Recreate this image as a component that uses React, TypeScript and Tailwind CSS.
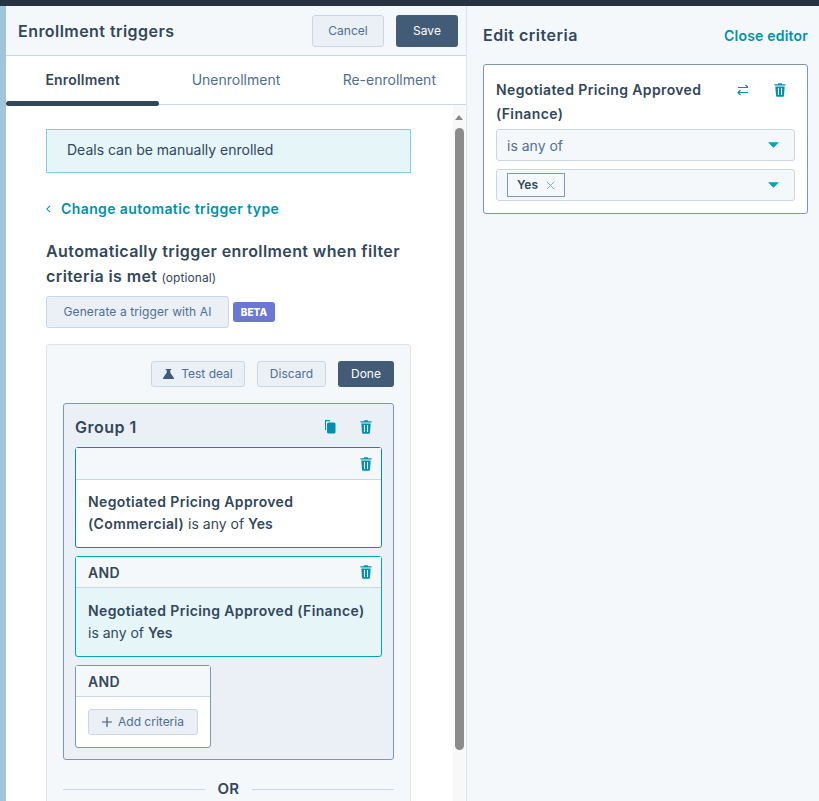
function Trash({ className = "" }: { className?: string }) {
  return (
    <svg viewBox="0 0 14 16" className={`w-[12px] h-[14px] ${className}`} fill="currentColor">
      <path d="M5 0h4l.6 1.2H13.5v1.6H.5V1.2h3.9z" />
      <path d="M1.5 3.8h11l-.9 11a1.2 1.2 0 0 1-1.2 1.2H3.6a1.2 1.2 0 0 1-1.2-1.2zM4.6 5.6v8.2h1.2V5.6zm3.6 0v8.2h1.2V5.6z" fillRule="evenodd" />
    </svg>
  );
}

function Caret() {
  return (
    <svg viewBox="0 0 12 6" className="w-[11px] h-[6px] text-[#00a4bd]" fill="currentColor">
      <path d="M0 0h12L6 6z" />
    </svg>
  );
}

function Tab({ label, active }: { label: string; active?: boolean }) {
  return (
    <div className={`flex-1 flex items-center justify-center pb-[2px] text-[14px] ${active ? "font-semibold tracking-[0.2px] text-[#33475b]" : "text-[#516f90]"}`}>
      {label}
    </div>
  );
}

export default function App() {
  return (
    <div className="w-[819px] h-[801px] overflow-hidden flex flex-col bg-white text-[#33475b] font-['Inter','Open_Sans',sans-serif] text-[14px]">
      <div className="h-[6px] shrink-0 bg-[#253342]" />
      <div className="flex flex-1 min-h-0">
        <div className="w-[6px] shrink-0 bg-[#a0c4d9]" />

        {/* Left panel */}
        <div className="w-[461px] shrink-0 flex flex-col border-r border-[#dfe3eb] min-h-0">
          <div className="h-[50px] shrink-0 bg-[#f5f8fa] border-b border-[#cbd6e2] flex items-center justify-between pl-[12px] pr-[8px] pt-px">
            <span className="text-[16px] font-semibold tracking-[0.45px]">Enrollment triggers</span>
            <div className="flex gap-[12px]">
              <button className="w-[72px] h-[32px] rounded-[3px] border border-[#cbd6e2] bg-[#eaf0f6] text-[12px] text-[#506e91]">Cancel</button>
              <button className="w-[62px] h-[32px] rounded-[3px] bg-[#425b76] text-[12px] text-white">Save</button>
            </div>
          </div>
          <div className="relative h-[49px] shrink-0 flex border-b border-[#cbd6e2]">
            <Tab label="Enrollment" active />
            <Tab label="Unenrollment" />
            <Tab label="Re-enrollment" />
            <div className="absolute left-0 bottom-[-2px] w-[153px] h-[5px] rounded-full bg-[#33475b]" />
          </div>

          <div className="flex flex-1 min-h-0">
            <div className="flex-1 min-w-0 overflow-hidden pl-[40px] pr-[42px] pt-[24px]">
              <div className="h-[44px] flex items-center pl-[20px] pb-[3px] border border-[#7fd1de] bg-[#e5f5f8] text-[14px]">Deals can be manually enrolled</div>
              <div className="mt-[25px] flex items-center gap-[10px] text-[#0091ae] font-semibold text-[14px] tracking-[0.4px]">
                <svg viewBox="0 0 6 10" className="w-[5px] h-[8px]" fill="none" stroke="currentColor" strokeWidth="1.3"><path d="M5 1 1 5l4 4" /></svg>
                Change automatic trigger type
              </div>
              <div className="mt-[20px] text-[16px] leading-[25px] font-semibold tracking-[0.4px]">
                <div>Automatically trigger enrollment when filter</div>
                <div className="flex items-baseline gap-[4px]">
                  <span>criteria is met</span>
                  <span className="text-[12px] font-normal tracking-[0.1px]">(optional)</span>
                </div>
              </div>
              <div className="mt-[6px] flex items-center gap-[4px]">
                <button className="w-[183px] h-[32px] rounded-[3px] border border-[#cbd6e2] bg-[#eaf0f6] text-[12px] tracking-[0.1px] text-[#506e91]">Generate a trigger with AI</button>
                <span className="h-[20px] w-[42px] rounded-[3px] bg-[#6a78d1] text-white text-[10px] font-extrabold flex items-center justify-center">BETA</span>
              </div>

              <div className="mt-[16px] rounded-[3px] border border-[#dfe3eb] bg-[#f5f8fa] pt-[16px] px-[16px] pb-[16px]">
                <div className="flex justify-end gap-[12px]">
                  <button className="h-[26px] w-[94px] rounded-[3px] border border-[#cbd6e2] bg-[#eaf0f6] text-[12px] text-[#506e91] flex items-center justify-center gap-[7px]">
                    <svg viewBox="0 0 12 11" className="w-[11px] h-[10px] text-[#425b76]" fill="currentColor"><path d="M3 0h6v1H8v3l4 6v1H0v-1l4-6V1H3z" /></svg>
                    Test deal
                  </button>
                  <button className="h-[26px] w-[69px] rounded-[3px] border border-[#cbd6e2] bg-[#eaf0f6] text-[12px] text-[#506e91]">Discard</button>
                  <button className="h-[26px] w-[56px] rounded-[3px] bg-[#425b76] text-[12px] text-white">Done</button>
                </div>

                <div className="mt-[16px] rounded-[3px] border border-[#7c98b6] bg-[#eaf0f6] px-[11px] pb-[11px]">
                  <div className="h-[43px] flex items-center justify-between pt-[3px]">
                    <span className="text-[16px] font-semibold tracking-[0.5px]">Group 1</span>
                    <div className="flex items-center gap-[24px] pr-[10px] text-[#0091ae]">
                      <svg viewBox="0 0 12 14" className="w-[12px] h-[14px]" fill="currentColor"><path d="M1 0h5v1.2H2V10H1z" /><rect x="3" y="2.5" width="8.5" height="11" rx="1.5" /></svg>
                      <Trash />
                    </div>
                  </div>

                  <div className="rounded-[3px] border border-[#0091ae] bg-white">
                    <div className="h-[32px] bg-[#f5f8fa] border-b border-[#cbd6e2] flex items-center justify-end pr-[9px] text-[#0091ae]"><Trash /></div>
                    <div className="h-[67px] pl-[12px] pt-[11px] leading-[22px]">
                      <span className="font-semibold tracking-[0.37px]">Negotiated Pricing Approved</span><br /><span className="font-semibold tracking-[0.37px]">(Commercial)</span> is any of <span className="font-semibold">Yes</span>
                    </div>
                  </div>

                  <div className="mt-[8px] rounded-[3px] border border-[#00a4bd] bg-[#e5f5f8]">
                    <div className="h-[31px] bg-[#f5f8fa] border-b border-[#cbd6e2] flex items-center justify-between pl-[12px] pr-[9px]">
                      <span className="font-semibold tracking-[0.3px]">AND</span>
                      <span className="text-[#0091ae]"><Trash /></span>
                    </div>
                    <div className="h-[68px] pl-[12px] pt-[12px] leading-[22px]">
                      <span className="font-semibold tracking-[0.37px]">Negotiated Pricing Approved (Finance)</span><br />is any of <span className="font-semibold">Yes</span>
                    </div>
                  </div>

                  <div className="mt-[8px] w-[136px] rounded-[3px] border border-[#7c98b6] bg-white">
                    <div className="h-[31px] bg-[#f5f8fa] border-b border-[#cbd6e2] flex items-center pl-[12px]"><span className="font-semibold tracking-[0.3px]">AND</span></div>
                    <div className="h-[50px] pl-[12px] pt-[12px]">
                      <button className="w-[110px] h-[26px] rounded-[3px] border border-[#cbd6e2] bg-[#eaf0f6] text-[12px] text-[#506e91] flex items-center justify-center gap-[6px]">
                        <svg viewBox="0 0 10 10" className="w-[10px] h-[10px] text-[#425b76]" fill="none" stroke="currentColor" strokeWidth="1.2"><path d="M5 0v10M0 5h10" /></svg>
                        Add criteria
                      </button>
                    </div>
                  </div>
                </div>

                <div className="mt-[18px] flex items-center gap-[12px]">
                  <div className="flex-1 h-px bg-[#cbd6e2]" />
                  <span className="font-semibold text-[15px] tracking-[0.4px]">OR</span>
                  <div className="flex-1 h-px bg-[#cbd6e2]" />
                </div>
              </div>
            </div>

            {/* Scrollbar */}
            <div className="w-[12px] shrink-0 mr-[1px] flex flex-col items-center bg-[#f8f8f8] pt-[10px]">
              <svg viewBox="0 0 8 5" className="w-[8px] h-[5px] text-[#8a8a8a]" fill="currentColor"><path d="M4 0l4 5H0z" /></svg>
              <div className="mt-[8px] w-[9px] h-[622px] rounded-full bg-[#8c8c8c]" />
            </div>
          </div>
        </div>

        {/* Right panel */}
        <div className="flex-1 min-w-0 bg-[#f5f8fa] pl-[16px] pr-[11px]">
          <div className="mt-[17px] flex items-center justify-between">
            <span className="text-[16px] font-semibold tracking-[0.5px]">Edit criteria</span>
            <span className="text-[14px] font-semibold tracking-[0.2px] text-[#0091ae]">Close editor</span>
          </div>
          <div className="mt-[17px] h-[150px] rounded-[3px] border border-[#7c98b6] bg-white px-[12px] pt-[13px]">
            <div className="flex justify-between">
              <div className="font-semibold tracking-[0.37px] leading-[24px] w-[220px]">Negotiated Pricing Approved (Finance)</div>
              <div className="flex gap-[25px] pt-[5px] pr-[9px] text-[#0091ae]">
                <svg viewBox="0 0 12 12" className="w-[12px] h-[14px]" fill="none" stroke="currentColor" strokeWidth="1.2"><path d="M1 3.5h10M8.5 1 11 3.5M11 8.5H1M3.5 6 1 8.5 3.5 11" /></svg>
                <Trash />
              </div>
            </div>
            <div className="mt-[3px] h-[32px] rounded-[3px] border border-[#cbd6e2] bg-[#f5f8fa] flex items-center justify-between pl-[10px] pr-[15px] text-[#516f90]">
              is any of <Caret />
            </div>
            <div className="mt-[8px] h-[32px] rounded-[3px] border border-[#cbd6e2] bg-[#f5f8fa] flex items-center justify-between pl-[10px] pr-[15px]">
              <span className="h-[24px] w-[58px] border border-[#7c98b6] bg-[#f5f8fa] flex items-center justify-center gap-[8px] text-[12px] font-semibold">
                Yes
                <svg viewBox="0 0 10 10" className="w-[9px] h-[9px] text-[#7c98b6]" fill="none" stroke="currentColor" strokeWidth="1"><path d="M1 1l8 8M9 1l-8 8" /></svg>
              </span>
              <Caret />
            </div>
          </div>
        </div>
      </div>
    </div>
  );
}
